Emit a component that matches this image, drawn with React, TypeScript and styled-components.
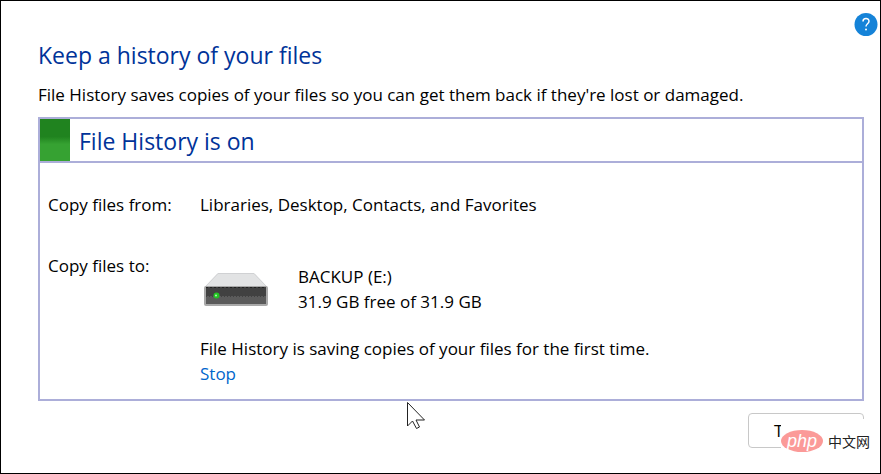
import React from "react";
import styled, { createGlobalStyle } from "styled-components";

const GlobalStyle = createGlobalStyle`
  * { box-sizing: border-box; }
  body { margin: 0; background: #fff; }
  h1, h2, p, dl, dt, dd { margin: 0; font-weight: 400; }
`;

const Page = styled.div`
  min-height: 100vh;
  border: 1px solid #000;
  background: #fff;
  color: #000;
  font-family: "Open Sans", "Noto Sans", sans-serif;
  font-size: 17px;
  line-height: 25px;
`;

const TopBar = styled.header`
  display: flex;
  justify-content: flex-end;
  padding: 11px 2px 0 0;
`;

const HelpButton = styled.button`
  width: 24px;
  height: 24px;
  padding: 0;
  border: 0;
  background: none;
  svg { display: block; }
`;

const Content = styled.main`
  padding: 2px 16px 0 37px;
`;

const Title = styled.h1`
  font-size: 23px;
  line-height: 34px;
  color: #003399;
`;

const Intro = styled.p`
  margin-top: 10px;
`;

const Panel = styled.section`
  margin-top: 10px;
  border: 2px solid #acaed9;
`;

const PanelHeader = styled.div`
  display: flex;
  align-items: center;
  gap: 9px;
  height: 44px;
  border-bottom: 2px solid #acaed9;
`;

const StatusMark = styled.span`
  align-self: stretch;
  width: 30px;
  background: linear-gradient(#20831f 0 42%, #36a232 60%);
`;

const PanelTitle = styled.h2`
  padding-top: 2px;
  font-size: 23px;
  line-height: 34px;
  color: #003399;
`;

const Details = styled.dl`
  display: grid;
  grid-template-columns: 152px 1fr;
  row-gap: 36px;
  padding: 29px 8px 13px;
`;

const Destination = styled.dd`
  display: flex;
  flex-direction: column;
  align-items: flex-start;
  gap: 22px;
  padding-top: 11px;
`;

const Drive = styled.div`
  display: flex;
  align-items: center;
  gap: 30px;
`;

const DriveIcon = styled.svg`
  display: block;
  width: 68px;
  height: 40px;
`;

const StopLink = styled.a`
  display: block;
  width: max-content;
  color: #0066cc;
  text-decoration: none;
`;

const Actions = styled.div`
  position: relative;
  display: flex;
  justify-content: flex-end;
  padding: 12px 0 0;
`;

const ActionButton = styled.button`
  width: 116px;
  height: 35px;
  padding: 0 0 0 25px;
  border: 1px solid #c8c8c8;
  border-radius: 4px;
  background: #fff;
  color: #000;
  font: inherit;
  text-align: left;
`;

const Watermark = styled.div`
  position: absolute;
  top: 18px;
  right: -8px;
  display: flex;
  align-items: center;
  gap: 5px;
  width: 91px;
  height: 44px;
  background: #fff;
  color: #222;
  font-family: "Noto Sans CJK SC", sans-serif;
  font-size: 14px;
  line-height: 20px;
  white-space: nowrap;
`;

const PhpBadge = styled.span`
  display: flex;
  align-items: center;
  justify-content: center;
  width: 42px;
  height: 22px;
  border-radius: 50%;
  background: #fb9a98;
  color: #fff;
  font-family: "Liberation Sans", sans-serif;
  font-size: 18px;
  font-style: italic;
  line-height: 18px;
`;

const Pointer = styled.svg`
  position: fixed;
  left: 406px;
  top: 401px;
  width: 20px;
  height: 30px;
  pointer-events: none;
`;

export default function App() {
  return (
    <Page>
      <GlobalStyle />
      <TopBar>
        <HelpButton type="button" aria-label="Help">
          <svg width="24" height="24" viewBox="0 0 24 24">
            <circle cx="12" cy="12.500" r="11.500" fill="#1583d8" />
            <path d="M9 9.500C9 5.500 15 5.700 15 9.200c0 2.400-3 2.600-3 5.200" fill="none" stroke="#fff" strokeWidth="1.500" />
            <circle cx="12" cy="17.500" r="1" fill="#fff" />
          </svg>
        </HelpButton>
      </TopBar>
      <Content>
        <Title>Keep a history of your files</Title>
        <Intro>File History saves copies of your files so you can get them back if they're lost or damaged.</Intro>
        <Panel>
          <PanelHeader>
            <StatusMark />
            <PanelTitle>File History is on</PanelTitle>
          </PanelHeader>
          <Details>
            <dt>Copy files from:</dt>
            <dd>Libraries, Desktop, Contacts, and Favorites</dd>
            <dt>Copy files to:</dt>
            <Destination>
              <Drive>
                <DriveIcon viewBox="0 -1 68 40" aria-hidden="true">
                  <path d="M18 3h36l13 14H5z" fill="#e2e3e4" />
                  <path d="M18 3.500h36M18 3.500L5 17M54 3.500L67 17" fill="none" stroke="#d0d1d3" />
                  <rect x="4" y="16" width="64" height="20" rx="2" fill="#a9a9a9" />
                  <rect x="6" y="17" width="60" height="17" fill="#5b5b5b" />
                  <rect x="6" y="17" width="60" height="9" fill="#414141" />
                  <path d="M6 17.500h60" stroke="#222" strokeDasharray="2 2" />
                  <path d="M6 26.500h60" stroke="#414141" strokeDasharray="1 2" />
                  <circle cx="16.500" cy="25.500" r="3" fill="#22c522" />
                  <circle cx="16" cy="25.500" r="1" fill="#b8f5b8" />
                </DriveIcon>
                <div>
                  <p>BACKUP (E:)</p>
                  <p>31.9 GB free of 31.9 GB</p>
                </div>
              </Drive>
              <div>
                <p>File History is saving copies of your files for the first time.</p>
                <StopLink href="#stop">Stop</StopLink>
              </div>
            </Destination>
          </Details>
        </Panel>
        <Actions>
          <ActionButton type="button">T</ActionButton>
          <Watermark>
            <PhpBadge>php</PhpBadge>
            <span>中文网</span>
          </Watermark>
        </Actions>
      </Content>
      <Pointer viewBox="0 0 20 30" aria-hidden="true">
        <path d="M1.500 1.500v23.500l5-5 4 7.500 3-1.500-3.500-7h8.500z" fill="#fff" stroke="#222" />
      </Pointer>
    </Page>
  );
}
